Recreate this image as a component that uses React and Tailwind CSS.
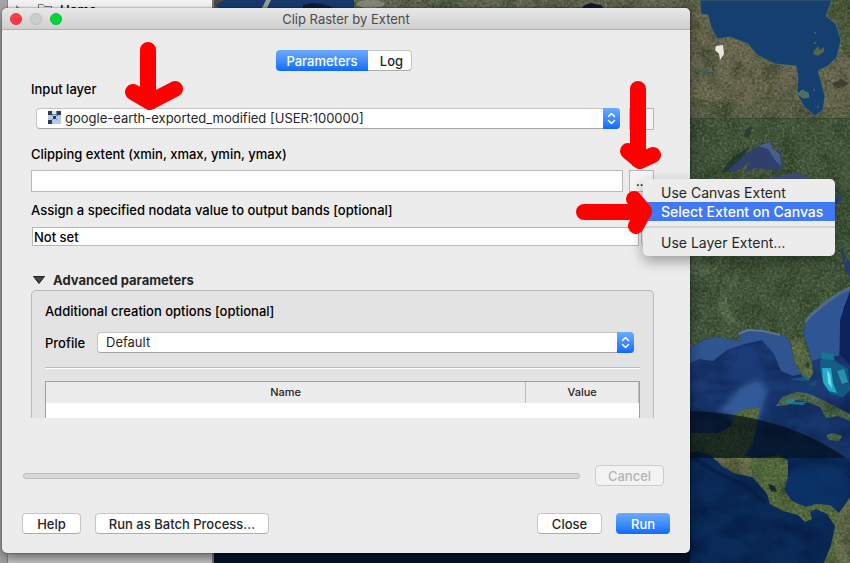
import React from "react";

function SatelliteMap() {
  return (
    <svg
      className="absolute inset-0 h-full w-full"
      viewBox="0 0 850 563"
      preserveAspectRatio="xMaxYMin slice"
      aria-hidden="true"
    >
      <defs>
        <filter id="grain" x="0" y="0" width="100%" height="100%" colorInterpolationFilters="sRGB">
          <feTurbulence type="fractalNoise" baseFrequency="0.4" numOctaves="3" seed="7" result="n" />
          <feColorMatrix
            in="n"
            type="matrix"
            values="0 0 0 0 0.1  0 0 0 0 0.16  0 0 0 0 0.08  0.9 0 0 0 -0.32"
            result="dark"
          />
          <feComposite in="dark" in2="SourceGraphic" operator="in" result="d" />
          <feColorMatrix
            in="n"
            type="matrix"
            values="0 0 0 0 0.66  0 0 0 0 0.62  0 0 0 0 0.48  0 0.8 0 0 -0.33"
            result="light"
          />
          <feComposite in="light" in2="SourceGraphic" operator="in" result="l" />
          <feTurbulence type="fractalNoise" baseFrequency="0.05" numOctaves="3" seed="12" result="m" />
          <feColorMatrix
            in="m"
            type="matrix"
            values="0 0 0 0 0.12  0 0 0 0 0.2  0 0 0 0 0.1  1.2 0 0 0 -0.5"
            result="patch"
          />
          <feComposite in="patch" in2="SourceGraphic" operator="in" result="p" />
          <feMerge>
            <feMergeNode in="SourceGraphic" />
            <feMergeNode in="p" />
            <feMergeNode in="d" />
            <feMergeNode in="l" />
          </feMerge>
        </filter>
        <filter id="relief" x="0" y="0" width="100%" height="100%" colorInterpolationFilters="sRGB">
          <feTurbulence type="fractalNoise" baseFrequency="0.03 0.05" numOctaves="4" seed="3" result="n" />
          <feColorMatrix
            in="n"
            type="matrix"
            values="0 0 0 0 0  0 0 0 0 0.05  0 0 0 0 0.18  1 0 0 0 -0.4"
            result="dark"
          />
          <feComposite in="dark" in2="SourceGraphic" operator="in" result="d" />
          <feMerge>
            <feMergeNode in="SourceGraphic" />
            <feMergeNode in="d" />
          </feMerge>
        </filter>
        <filter id="soft" x="-20%" y="-20%" width="140%" height="140%">
          <feGaussianBlur stdDeviation="3" />
        </filter>
        <linearGradient id="gulf" x1="0" y1="0" x2="0" y2="1">
          <stop offset="0" stopColor="#1d3f7e" />
          <stop offset="1" stopColor="#163468" />
        </linearGradient>
      </defs>

      {/* Oceans */}
      <rect width="850" height="563" fill="#04142e" />
      <g filter="url(#relief)">
        <rect x="690" y="310" width="160" height="148" fill="url(#gulf)" />
        <rect x="690" y="458" width="160" height="105" fill="#0a2a58" />
      </g>
      <ellipse cx="815" cy="490" rx="38" ry="26" fill="#0d3870" opacity="0.6" filter="url(#soft)" />

      {/* Northern land */}
      <g filter="url(#grain)">
        <rect x="213" y="0" width="477" height="10" fill="#666a55" />
        <rect x="690" y="0" width="160" height="119" fill="#6f6b55" />
        <path d="M832 0H850V60L840 45L827 17Z" fill="#525f3e" />
        <path d="M690 98L740 104L790 92L806 112L850 104V119H690Z" fill="#5f634a" />
        <path
          d="M690 118H850V288L838 294L824 304L812 314L805 322L804 334L808 348L812 361L813 374L808 381L801 374L794 361L791 345L784 335L772 334L761 330H745L739 335L741 341L730 340L716 337L704 340L690 347Z"
          fill="#40583d"
        />
        <path d="M725 274L742 267L736 284L726 294L728 306L736 322L728 325L718 308L721 290Z" fill="#5d7250" opacity="0.7" />
        <path d="M690 256H724L716 270L703 276L690 274Z" fill="#52694a" />
        <path d="M791 340L800 338L811 361L813 374L808 381L801 374L794 361Z" fill="#5a6f46" />
      </g>
      <path d="M224 0H282L292 6L280 10H222L214 5Z" fill="#17396d" />
      <path d="M244 0H354V10H240Z" fill="#17396d" />
      <path d="M303 5L312 3L322 4L332 7L330 10H303Z" fill="#0d1c38" />
      <path d="M213 0H222L216 6L213 7Z" fill="#444b38" />
      <path d="M262 8L266 0H271L267 8Z" fill="#9aa096" />
      <ellipse cx="370" cy="4" rx="14" ry="4" fill="#9aa096" opacity="0.6" />
      <path d="M583 6L590 3L601 5L604 9H582Z" fill="#101b32" />

      {/* Hudson Bay and James Bay */}
      <path
        d="M700 0H832L826 16L836 24L841 40L837 57L828 66L818 71L821 81L825 96L823 110L815 116L805 108L799 98L797 90L798 78L796 66L775 64L757 55L748 44L730 37L717 39L711 27L708 15L701 14Z"
        fill="#153f6f"
        stroke="#5b735d"
        strokeWidth="0.7"
      />
      <path d="M798 94L802 90L808 93L809 97L803 98Z" fill="#5b6a51" stroke="#2e8581" strokeWidth="1" />
      <g fill="#57634f">
        <path d="M814 51L818 46L820 50L824 47L824 52L818 56L813 54Z" />
        <circle cx="815" cy="43" r="1" />
        <circle cx="815" cy="33" r="1" />
        <circle cx="814" cy="90" r="1" />
        <circle cx="818" cy="107" r="1" />
      </g>
      <path d="M716 46L723 45L724 54L720 60L719 54L715 50Z" fill="#e8e8e0" />
      <path d="M701 72L706 70L708 73L703 75Z" fill="#28666b" />
      <path d="M832 83L842 79L849 84L840 88L834 87Z" fill="#242d24" opacity="0.6" />
      <path d="M745 130L752 126L750 137L744 137Z" fill="#27392f" opacity="0.8" />
      <path d="M690 118.500H850" stroke="#2f3b2d" opacity="0.5" />

      {/* Great Lakes */}
      <path d="M721 172L732 158L750 146L741 160L730 172Z" fill="#1d3428" opacity="0.8" />
      <path
        d="M727 171L739 160L753 149L766 143L771 141L773 149L781 152L782 169L771 170L756 168L744 172L751 161L735 172Z"
        fill="#303f6e"
      />
      <path d="M758 146L770 142L773 149L780 154L781 166L775 160L768 149Z" fill="#4a5f87" />
      <path d="M770 178L786 175L797 173L809 178L815 181H770Z" fill="#3c4e7c" />
      <path d="M835 199L841 194L843 198L840 202L835 204Z" fill="#304474" />
      <path d="M841 248L844 256L846 270L850 278V262L847 259L846 270Z" fill="#253d6e" stroke="#253d6e" />

      {/* Continental shelf */}
      <path
        d="M690 347L704 340L716 337L730 340L741 341L739 335L745 330H761L772 334L784 335L791 345L794 361L801 374L793 376L781 371L774 354L762 340L744 344L727 350L713 361L699 359L690 363Z"
        fill="#2f5490"
      />
      <path
        d="M850 288L838 294L824 304L812 314L805 322L804 334L808 348L812 361L824 357L839 356L840 330L844 307L850 294Z"
        fill="#2f5595"
      />
      <path d="M850 291L840 320V355L850 365Z" fill="#0d225b" />
      <path d="M850 288L838 294L824 304L812 314L805 322" fill="none" stroke="#687f91" strokeWidth="3" opacity="0.6" />
      <path d="M738 334L748 330L763 331L780 335" fill="none" stroke="#6f8697" strokeWidth="2" opacity="0.7" />
      <path
        d="M716 412L730 399L745 384L758 380L768 390L763 405L759 418L739 420L730 416Z"
        fill="#335a98"
        filter="url(#soft)"
      />
      <path d="M728 420L738 390L758 381L765 393L760 418Z" fill="#345a98" opacity="0.4" />

      {/* Bahamas */}
      <g>
        <path d="M821 352L834 354L835 361L848 369L850 390L843 397L831 394L824 386L820 370Z" fill="#127894" opacity="0.55" />
        <path d="M822 352L833 355L834 360L822 359Z" fill="#127894" />
        <path d="M822 368L831 368L833 383L837 393L829 391L823 382Z" fill="#25abc7" />
        <path d="M827 370L830 374L832 388L828 383Z" fill="#74dfeb" />
        <path d="M837 371L844 369L848 382L842 384Z" fill="#2691ac" />
        <path d="M809 384L816 380L816 385L811 387Z" fill="#145069" />
        <path d="M790 379L799 378L806 375L810 379L803 381L794 380Z" fill="#176783" opacity="0.7" />
      </g>

      {/* Florida detail, Cuba, Jamaica, Central and South America */}
      <path d="M805 365L808 361L810 365L808 368Z" fill="#293e2b" />
      <g filter="url(#grain)">
        <path
          d="M776 406L782 397L796 392L807 393L823 400L836 407L850 414V421L838 416L826 418L820 407L807 402L796 400L788 405Z"
          fill="#4d6b50"
        />
        <path d="M826 435L833 433L842 436L839 441L829 440Z" fill="#44643f" />
        <path
          d="M734 414L745 409L760 408L757 421L753 438L748 449L744 456L760 458L779 455L788 461V477L784 490L792 501L806 507L816 504L830 505L839 513L850 497V563H824L831 545L835 526L827 514L816 509L810 512L812 519L805 522L798 515L783 511L770 504L767 494L757 482L752 477L733 473L722 466L711 455L697 451L690 453V433L703 433L719 433L731 426Z"
          fill="#536c3c"
        />
        <path d="M713 458H752L748 468L755 478L733 472Z" fill="#757551" />
        <path d="M839 513L850 500V563H836L834 540Z" fill="#6a7350" />
      </g>
      <path d="M783 401L793 398L795 402L807 402L803 405L789 404Z" fill="#238c9d" opacity="0.7" />
      <path d="M768 484L775 486L777 492L771 491Z" fill="#15282c" />
      <path d="M757 421L752 443L745 455" stroke="#226c78" strokeWidth="1.5" fill="none" />
      <path d="M690 456L716 472L746 486L765 503" stroke="#061a40" strokeWidth="4" fill="none" opacity="0.6" />

      {/* Edge of the darker image tile */}
      <path d="M690 411Q784 414 846 458H690Z" fill="#000a12" opacity="0.65" />
    </svg>
  );
}

function BackgroundApp() {
  return (
    <div className="absolute inset-0 overflow-hidden" aria-hidden="true">
      <SatelliteMap />
      <div className="relative flex h-full w-[214px] border-r-2 border-[#777777] bg-[#a5a5a5]">
        <div className="ml-[7px] flex flex-1 flex-col justify-between border-l border-[#888888] bg-[#f4f4f4]">
          <div className="flex h-5 items-center gap-4 pl-2 text-[13px] leading-4 font-medium text-black">
            <svg width="6" height="10" viewBox="0 0 6 10">
              <path d="M0 0L6 5L0 10Z" fill="#888888" />
            </svg>
            <span className="flex items-center gap-2">
              <svg width="14" height="12" viewBox="0 0 14 12" fill="none" stroke="#777777">
                <path d="M.5 11V.5H5L6.500 2.500H13.500V11M3 5.500H8L9 7H14" />
              </svg>
              Home
            </span>
          </div>
          <div className="h-[14px] bg-gradient-to-b from-[#a8a8a8] to-[#d0d0d0]" />
        </div>
      </div>
    </div>
  );
}

function Arrow({ className, viewBox, d }) {
  return (
    <svg className={"pointer-events-none absolute z-20 " + className} viewBox={viewBox} aria-hidden="true">
      <path d={d} fill="none" stroke="#ff0000" strokeWidth="16" strokeLinecap="round" strokeLinejoin="round" />
    </svg>
  );
}

function Chevrons() {
  return (
    <span className="pointer-events-none absolute inset-y-0 right-0 flex w-[17px] items-center justify-center rounded-r bg-gradient-to-b from-[#6aabfb] to-[#0b6bfb]">
      <svg width="9" height="13" viewBox="0 0 9 13" fill="none" stroke="white" strokeWidth="1.500" strokeLinecap="round" strokeLinejoin="round">
        <path d="M1.500 4.500L4.500 1.500L7.500 4.500M1.500 8.500L4.500 11.500L7.500 8.500" />
      </svg>
    </span>
  );
}

function RasterIcon() {
  return (
    <svg className="pointer-events-none absolute top-[3px] left-3" width="13" height="13" viewBox="0 0 13 13" aria-hidden="true">
      <rect width="13" height="13" fill="#b4cbe6" />
      <path d="M0 0H4V4H0ZM9 0H13V4H9ZM5 5H8V8H5ZM0 9H4V13H0Z" fill="#2c3a52" />
      <path d="M4 4H5V5H4ZM8 4H10V5H8ZM4 8H5V9H4ZM8 8H9V9H8ZM4 0H9V4H4Z" fill="#6d87a8" />
      <path d="M4 0H8V3H4Z" fill="#dfe8f2" />
    </svg>
  );
}

const selectClass =
  "block h-[21px] w-full appearance-none rounded border border-[#c4c4c4] border-b-[#a6a6a6] bg-white pb-[2px] text-[13px] leading-4 text-[#262626] outline-none";
const buttonClass =
  "h-[21px] rounded border border-[#c6c6c6] border-b-[#adadad] bg-white text-[13px] leading-4 font-medium text-[#262626]";

export default function App() {
  return (
    <div className="relative min-h-screen overflow-hidden bg-[#04142e] pt-2 pr-40 pb-[10px] pl-[2px] font-['Inter','Liberation_Sans',sans-serif] text-[13px] leading-4 text-black">
      <BackgroundApp />

      <main className="relative rounded-[5px] bg-[#ececec] pb-[19px] shadow-[0_0_2px_rgba(0,0,0,0.6),0_6px_14px_rgba(0,0,0,0.4)]">
        <header className="relative flex h-[22px] items-center justify-center rounded-t-[5px] border-b border-[#b1b1b1] bg-gradient-to-b from-[#e8e8e8] to-[#cfcfcf]">
          <div className="absolute left-2 flex gap-2">
            <button aria-label="Close window" className="size-3 rounded-full border border-[#e2343c] bg-[#ff3b47]" />
            <button aria-label="Minimize" disabled className="size-3 rounded-full border border-[#bcbcbc] bg-[#cdcdcd]" />
            <button aria-label="Zoom" className="size-3 rounded-full border border-[#0cbc35] bg-[#05d53c]" />
          </div>
          <h1 className="text-[13px] text-[#4b4b4b]">Clip Raster by Extent</h1>
        </header>

        <div role="tablist" className="mt-5 flex justify-center pr-1">
          <button role="tab" aria-selected="true" className="h-[21px] w-[92px] rounded-l bg-gradient-to-b from-[#6aabfb] to-[#0b6bfb] font-medium text-white">
            Parameters
          </button>
          <button role="tab" aria-selected="false" className="h-[21px] w-11 rounded-r border border-l-0 border-[#c6c6c6] border-b-[#adadad] bg-white pl-1 font-medium text-[#262626]">
            Log
          </button>
        </div>

        <form className="mt-[10px] pr-9 pl-[29px]" onSubmit={(e) => e.preventDefault()}>
          <label htmlFor="layer" className="block font-medium">Input layer</label>
          <div className="mt-[11px] flex items-start gap-[9px] pl-[5px]">
            <div className="relative flex-1">
              <select id="layer" className={selectClass + " pl-7"}>
                <option>google-earth-exported_modified [USER:100000]</option>
              </select>
              <RasterIcon />
              <Chevrons />
            </div>
            <button type="button" aria-label="Browse input layer" className="h-[22px] w-[25px] border border-[#b5b5b5] bg-[#f4f4f4]" />
          </div>

          <label htmlFor="extent" className="mt-4 block font-medium">Clipping extent (xmin, xmax, ymin, ymax)</label>
          <div className="mt-2 flex gap-[6px]">
            <input id="extent" className="h-[22px] min-w-0 flex-1 border border-[#b8b8b8] bg-white px-1 outline-none" />
            <button type="button" className="h-[22px] w-[25px] border border-[#b5b5b5] bg-[#f4f4f4] text-[13px]">…</button>
          </div>

          <label htmlFor="nodata" className="mt-[10px] block font-medium">
            Assign a specified nodata value to output bands [optional]
          </label>
          <div className="mt-[9px] flex gap-[2px] pl-px">
            <input id="nodata" defaultValue="Not set" className="h-[19px] min-w-0 flex-1 border border-[#b8b8b8] bg-white px-px font-medium outline-none" />
            <span className="h-[19px] w-[13px] rounded border border-[#bbbbbb] bg-white" />
          </div>

          <button type="button" aria-expanded="true" className="mt-[26px] flex items-center gap-2 pl-[2px] text-[13px] leading-4 font-bold text-[#262626]">
            <svg width="12" height="8" viewBox="0 0 12 8" aria-hidden="true">
              <path d="M.5 .5H11.500L6 7.500Z" fill="#444444" stroke="#222222" />
            </svg>
            Advanced parameters
          </button>

          <section className="mt-[2px] rounded-t-[5px] border border-b-0 border-[#b9b9b9] bg-[#e3e3e3] pt-3 pr-[13px] pl-[13px]">
            <h2 className="pr-2 text-[13px] leading-4 font-medium">Additional creation options [optional]</h2>
            <div className="mt-[13px] flex items-center pr-[6px]">
              <label htmlFor="profile" className="w-[52px] font-medium">Profile</label>
              <div className="relative flex-1">
                <select id="profile" className={selectClass + " pl-2"}>
                  <option>Default</option>
                </select>
                <Chevrons />
              </div>
            </div>
            <hr className="mt-[14px] h-[2px] border-t border-b border-t-[#bdbdbd] border-b-white" />
            <table className="mt-3 w-full table-fixed border-separate border-spacing-0 border border-b-0 border-[#a0a0a0] bg-white text-[11px] leading-[21px]">
              <colgroup>
                <col className="w-[81%]" />
                <col />
              </colgroup>
              <thead>
                <tr className="bg-[#ececec] text-[#262626]">
                  <th className="border-r border-[#bcbcbc] font-medium">Name</th>
                  <th className="border-r border-[#bcbcbc] font-medium">Value</th>
                </tr>
              </thead>
              <tbody>
                <tr>
                  <td colSpan={2} className="h-[15px]" />
                </tr>
              </tbody>
            </table>
          </section>
        </form>

        <div className="mt-[47px] flex items-center gap-[15px] pr-[26px] pl-[21px]">
          <div role="progressbar" aria-label="Progress" aria-valuenow={0} className="h-[6px] flex-1 rounded-full border border-[#bdbdbd] bg-[#d8d8d8]" />
          <button disabled className="h-[21px] w-[69px] rounded border border-[#cccccc] bg-[#f3f3f3] font-medium text-[#b4b4b4]">
            Cancel
          </button>
        </div>

        <footer className="mt-[27px] flex pr-5 pl-5">
          <button className={buttonClass + " w-[59px]"}>Help</button>
          <button className={buttonClass + " ml-[14px] w-[174px]"}>Run as Batch Process…</button>
          <button className={buttonClass + " mr-[14px] ml-auto w-[65px]"}>Close</button>
          <button className="h-[21px] w-[54px] rounded bg-gradient-to-b from-[#6aabfb] to-[#0b6bfb] font-medium text-white">Run</button>
        </footer>

        <div role="menu" className="absolute top-[171px] -right-[145px] z-10 w-48 rounded-[5px] bg-[#ececec] py-1 text-sm leading-[19px] text-[#262626] shadow-[0_5px_14px_rgba(0,0,0,0.35)]">
          <button role="menuitem" className="block w-full pl-[18px] text-left">Use Canvas Extent</button>
          <button role="menuitem" className="block w-full bg-[#4178f4] pl-[18px] text-left font-medium text-white">Select Extent on Canvas</button>
          <hr className="my-[5px] border-t-2 border-[#d4d4d4]" />
          <button role="menuitem" className="block w-full pl-[18px] text-left">Use Layer Extent…</button>
        </div>

        <Arrow className="top-[33px] left-[121px] h-[70px] w-[62px]" viewBox="0 0 62 70" d="M25 9V60M10 51L27 61L52 48" />
        <Arrow className="top-[72px] right-[27px] h-[92px] w-[45px]" viewBox="0 0 45 92" d="M20 9V80M10 71L22 81L35 75" />
        <Arrow className="top-[180px] right-[36px] h-[49px] w-[80px]" viewBox="0 0 80 49" d="M10 24H70M60 11L70 23L62 38" />
      </main>
    </div>
  );
}
